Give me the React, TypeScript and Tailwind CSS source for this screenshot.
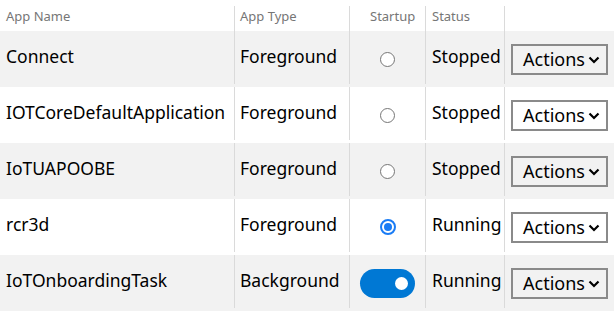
import React from "react";

type Row = { name: string; type: string; startup: "off" | "on" | "toggle"; status: string };

const rows: Row[] = [
  { name: "Connect", type: "Foreground", startup: "off", status: "Stopped" },
  { name: "IOTCoreDefaultApplication", type: "Foreground", startup: "off", status: "Stopped" },
  { name: "IoTUAPOOBE", type: "Foreground", startup: "off", status: "Stopped" },
  { name: "rcr3d", type: "Foreground", startup: "on", status: "Running" },
  { name: "IoTOnboardingTask", type: "Background", startup: "toggle", status: "Running" },
];

const cols = "grid grid-cols-[234px_115px_76px_79px_110px]";

function Chevron() {
  return (
    <svg width="12" height="8" viewBox="0 0 12 8" className="ml-[3px] mt-[2px]">
      <polyline points="1.5,1.5 6,6 10.5,1.5" fill="none" stroke="#000" strokeWidth="2.2" />
    </svg>
  );
}

function Startup({ kind }: { kind: Row["startup"] }) {
  if (kind === "off")
    return <div className="w-[15px] h-[15px] rounded-full border border-[#767676] bg-white" />;
  if (kind === "on")
    return (
      <div className="w-[16px] h-[16px] rounded-full border-2 border-[#1a7cf5] bg-white flex items-center justify-center">
        <div className="w-[8px] h-[8px] rounded-full bg-[#1a7cf5]" />
      </div>
    );
  return (
    <div className="w-[55px] h-[29px] rounded-full bg-[#0078d4] flex items-center justify-end pr-[7px]">
      <div className="w-[13px] h-[13px] rounded-full bg-white" />
    </div>
  );
}

export default function App() {
  const font = { fontFamily: '"Noto Sans", "Open Sans", sans-serif' };
  return (
    <div className="w-[614px] h-[313px] bg-white overflow-hidden" style={font}>
      <div className={`${cols} h-[31px] text-[13px] text-[#767676]`}>
        <div className="pl-[6px] pt-[7px]">App Name</div>
        <div className="mt-[6px] border-l border-[#dadada] pl-[5px] pt-[1px]">App Type</div>
        <div className="mt-[6px] border-l border-[#dadada] pl-[20px] pt-[1px]">Startup</div>
        <div className="mt-[6px] border-l border-[#dadada] pl-[6px] pt-[1px]">Status</div>
        <div className="mt-[6px] border-l border-[#dadada]" />
      </div>
      {rows.map((r, i) => (
        <div key={r.name} className={`${cols} h-[56px] text-[17.5px] text-black ${i % 2 === 0 ? "bg-[#f2f2f2]" : "bg-white"}`}>
          <div className="h-[53px] flex items-center pl-[6px] pb-[3px]">{r.name}</div>
          <div className="h-[53px] flex items-center border-l border-[#dadada] pl-[5px] pb-[3px]">{r.type}</div>
          <div className="h-[53px] flex items-center justify-center border-l border-[#dadada] pt-[3px]">
            <Startup kind={r.startup} />
          </div>
          <div className="h-[53px] flex items-center border-l border-[#dadada] pl-[6px] pb-[3px]">{r.status}</div>
          <div className="h-[53px] flex items-center border-l border-[#dadada] pl-[6px] pt-[3px]">
            <div className="w-[97px] h-[31px] border-2 border-[#8a8a8a] flex items-center pl-[10px] text-[18px]">
              <span className="leading-none pb-[1px]">Actions</span>
              <Chevron />
            </div>
          </div>
        </div>
      ))}
    </div>
  );
}
